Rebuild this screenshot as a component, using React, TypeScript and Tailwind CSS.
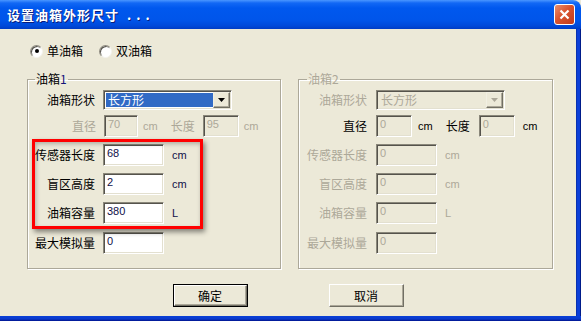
import React from "react";

const CJK = "font-['SimSun','Noto_Sans_CJK_SC',sans-serif]";
const LAT = "font-['Liberation_Sans','Noto_Sans_CJK_SC',sans-serif]";

const sunken =
  "border border-t-[#8a877a] border-l-[#8a877a] border-b-white border-r-white shadow-[inset_1px_1px_0_#55534c,inset_-1px_-1px_0_#e3e0d0]";

const Radio = ({ checked, label }: { checked?: boolean; label: string }) => (
  <div className="flex items-center">
    <div className="w-[13px] h-[13px] rounded-full bg-white border border-t-[#8f8c80] border-l-[#8f8c80] border-b-[#f4f3ee] border-r-[#f4f3ee] shadow-[inset_1px_1px_0_#55534c] flex items-center justify-center">
      {checked && <div className="w-[4px] h-[4px] rounded-full bg-black" />}
    </div>
    <span className={`ml-[4px] text-[12px] leading-[14px] text-black ${CJK}`}>{label}</span>
  </div>
);

const TextBox = ({
  value,
  width,
  disabled
}: {
  value: string;
  width: string;
  disabled?: boolean;
}) => (
  <div
    className={`${width} h-[22px] ${sunken} ${disabled ? "bg-[#ece9d8] text-[#aca899]" : "bg-white text-[#101048]"} pl-[3px] pt-[2px] text-[11px] leading-[13px] ${LAT}`}
  >
    {value}
  </div>
);

const Combo = ({ disabled }: { disabled?: boolean }) => (
  <div
    className={`w-[129px] h-[20px] ${sunken} ${disabled ? "bg-[#ece9d8]" : "bg-white"} flex items-center pl-[2px] pr-[1px]`}
  >
    <div
      className={`flex-1 h-[14px] flex items-center pl-[2px] text-[12px] leading-[14px] ${CJK} ${disabled ? "text-[#aca899]" : "bg-[#316ac5] text-white"}`}
    >
      长方形
    </div>
    <div className="w-[17px] h-[16px] bg-[#ece9d8] border border-t-[#f1efe2] border-l-[#f1efe2] border-b-[#716f64] border-r-[#716f64] shadow-[inset_-1px_-1px_0_#aca899] flex items-center justify-center">
      <svg width="7" height="4" viewBox="0 0 7 4">
        <path d="M0 0h7L3.5 4z" fill={disabled ? "#aca899" : "#000"} />
      </svg>
    </div>
  </div>
);

const Label = ({
  text,
  width,
  grey
}: {
  text: string;
  width: string;
  grey?: boolean;
}) => (
  <span
    className={`${width} shrink-0 text-right text-[12px] leading-[14px] ${CJK} ${grey ? "text-[#aca899]" : "text-black"}`}
  >
    {text}
  </span>
);

const Unit = ({ text, className }: { text: string; className: string }) => (
  <span className={`text-[11px] leading-[13px] ${LAT} ${className}`}>{text}</span>
);

const TitleBar = () => (
  <div className="h-[29px] shrink-0 flex items-center justify-between rounded-tr-[8px] bg-[linear-gradient(#4a96ff_0px,#1268f5_3px,#0058ee_8px,#0055ea_20px,#0049d9_26px,#003cc4_29px)] pl-[7px] pr-[6px]">
    <span
      className={`text-white font-bold text-[13px] leading-[16px] tracking-[1px] [text-shadow:1px_1px_0_#0a1c7a] ${CJK}`}
    >
      设置油箱外形尺寸
      <span className="ml-[8px] tracking-[5px]">...</span>
    </span>
    <div className="w-[21px] h-[21px] rounded-[3px] border border-white bg-[linear-gradient(135deg,#e9906f,#d9542f_45%,#c23a1b)] flex items-center justify-center">
      <svg width="11" height="11" viewBox="0 0 11 11">
        <path d="M1.5 1.5l8 8M9.5 1.5l-8 8" stroke="#fff" strokeWidth="2.2" />
      </svg>
    </div>
  </div>
);

const Group1 = () => (
  <fieldset className="w-[254px] h-[197px] border border-[#aca899] shadow-[1px_1px_0_#fff,inset_1px_1px_0_#fff]">
    <legend className={`ml-[7px] px-[1px] text-[12px] leading-[14px] text-black ${CJK}`}>
      油箱<span className="text-[#13137a]">1</span>
    </legend>
    <div className="flex flex-col">
      <div className="flex items-center mt-[4px]">
        <Label text="油箱形状" width="w-[67px]" />
        <div className="ml-[8px]">
          <Combo />
        </div>
      </div>
      <div className="flex items-center mt-[5px]">
        <Label text="直径" width="w-[68px]" grey />
        <div className="ml-[8px]">
          <TextBox value="70" width="w-[34px]" disabled />
        </div>
        <Unit text="cm" className="ml-[5px] text-[#aca899]" />
        <span className={`ml-[13px] text-[12px] leading-[14px] text-[#aca899] ${CJK}`}>长度</span>
        <div className="ml-[8px]">
          <TextBox value="95" width="w-[36px]" disabled />
        </div>
        <Unit text="cm" className="ml-[5px] text-[#aca899]" />
      </div>
      <div className="relative mt-[7px] flex flex-col gap-[7px]">
        <div className="flex items-center">
          <Label text="传感器长度" width="w-[67px]" />
          <div className="ml-[8px]">
            <TextBox value="68" width="w-[61px]" />
          </div>
          <Unit text="cm" className="ml-[8px] text-[#101048]" />
        </div>
        <div className="flex items-center">
          <Label text="盲区高度" width="w-[67px]" />
          <div className="ml-[8px]">
            <TextBox value="2" width="w-[61px]" />
          </div>
          <Unit text="cm" className="ml-[8px] text-[#101048]" />
        </div>
        <div className="flex items-center">
          <Label text="油箱容量" width="w-[67px]" />
          <div className="ml-[8px]">
            <TextBox value="380" width="w-[61px]" />
          </div>
          <Unit text="L" className="ml-[8px] text-[#101048]" />
        </div>
        <div className="absolute left-[4px] top-[-5px] w-[171px] h-[90px] border-[3px] border-[#ff0000] shadow-[2px_3px_5px_rgba(0,0,0,0.45),inset_1px_2px_4px_rgba(0,0,0,0.25)] pointer-events-none" />
      </div>
      <div className="flex items-center mt-[8px]">
        <Label text="最大模拟量" width="w-[67px]" />
        <div className="ml-[8px]">
          <TextBox value="0" width="w-[61px]" />
        </div>
      </div>
    </div>
  </fieldset>
);

const Group2 = () => (
  <fieldset className="w-[255px] h-[197px] border border-[#aca899] shadow-[1px_1px_0_#fff,inset_1px_1px_0_#fff]">
    <legend className={`ml-[8px] px-[1px] text-[12px] leading-[14px] text-[#aca899] ${CJK}`}>
      油箱2
    </legend>
    <div className="flex flex-col">
      <div className="flex items-center mt-[4px]">
        <Label text="油箱形状" width="w-[68px]" grey />
        <div className="ml-[9px]">
          <Combo disabled />
        </div>
      </div>
      <div className="flex items-center mt-[5px]">
        <Label text="直径" width="w-[68px]" />
        <div className="ml-[9px]">
          <TextBox value="0" width="w-[36px]" disabled />
        </div>
        <Unit text="cm" className="ml-[6px] text-black" />
        <span className={`ml-[13px] text-[12px] leading-[14px] text-black ${CJK}`}>长度</span>
        <div className="ml-[9px]">
          <TextBox value="0" width="w-[36px]" disabled />
        </div>
        <Unit text="cm" className="ml-[8px] text-black" />
      </div>
      <div className="mt-[7px] flex flex-col gap-[7px]">
        <div className="flex items-center">
          <Label text="传感器长度" width="w-[68px]" grey />
          <div className="ml-[9px]">
            <TextBox value="0" width="w-[61px]" disabled />
          </div>
          <Unit text="cm" className="ml-[8px] text-[#aca899]" />
        </div>
        <div className="flex items-center">
          <Label text="盲区高度" width="w-[68px]" grey />
          <div className="ml-[9px]">
            <TextBox value="0" width="w-[61px]" disabled />
          </div>
          <Unit text="cm" className="ml-[8px] text-[#aca899]" />
        </div>
        <div className="flex items-center">
          <Label text="油箱容量" width="w-[68px]" grey />
          <div className="ml-[9px]">
            <TextBox value="0" width="w-[61px]" disabled />
          </div>
          <Unit text="L" className="ml-[8px] text-[#aca899]" />
        </div>
      </div>
      <div className="flex items-center mt-[8px]">
        <Label text="最大模拟量" width="w-[68px]" grey />
        <div className="ml-[9px]">
          <TextBox value="0" width="w-[61px]" disabled />
        </div>
      </div>
    </div>
  </fieldset>
);

const Button = ({ text, isDefault }: { text: string; isDefault?: boolean }) => (
  <div
    className={`w-[75px] h-[23px] ${isDefault ? "border border-black" : ""} flex`}
  >
    <div className="flex-1 bg-[#ece9d8] border border-t-white border-l-white border-b-[#716f64] border-r-[#716f64] shadow-[inset_-1px_-1px_0_#aca899] flex items-center justify-center">
      <span className={`text-[12px] leading-[14px] text-black ${CJK}`}>{text}</span>
    </div>
  </div>
);

export default function App() {
  return (
    <div className="w-[581px] h-[321px] flex flex-col overflow-hidden bg-[#ece9d8]">
      <TitleBar />
      <div className="flex flex-1 min-h-0">
        <div className="flex-1 flex flex-col">
          <div className="flex items-center pt-[15px] pl-[30px] gap-[16px]">
            <Radio checked label="单油箱" />
            <Radio label="双油箱" />
          </div>
          <div className="flex mt-[14px] pl-[27px] gap-[17px]">
            <Group1 />
            <Group2 />
          </div>
          <div className="flex justify-center gap-[81px] mt-[15px]">
            <Button text="确定" isDefault />
            <Button text="取消" />
          </div>
        </div>
        <div className="w-[5px] bg-[#0b3fd8] border-l border-[#0831b0] border-r border-r-[#001c8a]" />
      </div>
      <div className="h-[5px] shrink-0 bg-[linear-gradient(#0840d8,#0a3acc_60%,#00138c)]" />
    </div>
  );
}
